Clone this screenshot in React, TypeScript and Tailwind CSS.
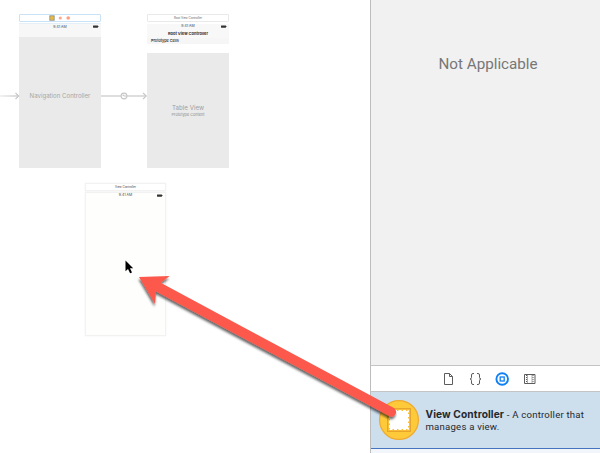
import React from "react";

function Battery({ className = "" }: { className?: string }) {
  return (
    <svg className={className} width="6" height="3" viewBox="0 0 6 3">
      <rect x="0" y="0.4" width="5" height="2.3" rx="0.4" fill="#333" />
      <rect x="5" y="1" width="0.7" height="1" fill="#777" />
    </svg>
  );
}

function StatusBar() {
  return (
    <div className="relative flex h-[4px] items-center justify-center text-[3.5px] leading-[4px] text-[#444]">
      <span>9:41 AM</span>
      <Battery className="absolute top-[0.5px] right-[2px]" />
    </div>
  );
}

function NavigationScene() {
  return (
    <div className="absolute top-[14px] left-[19px] w-[82px]">
      <div className="flex h-[8px] items-center justify-center rounded-[1px] border border-[#c9e2f5] bg-white">
        <svg width="22" height="6" viewBox="0 0 22 6">
          <rect x="0.3" y="0.3" width="5.4" height="5.4" rx="0.5" fill="#a09a88" />
          <circle cx="3" cy="3" r="1.9" fill="#e9b93c" />
          <circle cx="11.3" cy="3" r="1.6" fill="#ffa78c" />
          <circle cx="19.2" cy="3" r="1.8" fill="#ff9f80" />
        </svg>
      </div>
      <div className="mt-[1px] flex h-[145px] flex-col border-t border-[#e4eff7] bg-[#eaeaea]">
        <div className="h-[13px] shrink-0 bg-[#f7f7f7] pt-[0.5px]">
          <StatusBar />
        </div>
        <div className="mt-[54px] text-center text-[6.1px] leading-[10px] text-[#a6a6a6]">Navigation Controller</div>
      </div>
    </div>
  );
}

function TableScene() {
  return (
    <div className="absolute top-[14px] left-[147px] w-[82px]">
      <div className="h-[8px] rounded-[1px] border border-[#e9e9e9] bg-white text-center text-[2.9px] leading-[6px] text-[#666]">
        Root View Controller
      </div>
      <div className="mt-[2px] h-[144px] bg-[#eaeaea]">
        <div className="h-[14px] bg-[#f8f8f8]">
          <StatusBar />
          <div className="pt-[2.5px] text-center text-[4px] leading-[6px] font-bold text-[#333]">Root View Controller</div>
        </div>
        <div className="h-[6px] bg-[#f6f6f6] pl-[4px] text-[3.8px] leading-[6px] font-medium text-[#111]">
          Prototype Cells
        </div>
        <div className="h-[9px] bg-white" />
        <div className="pt-[50px] text-center text-[6.2px] leading-[9px] text-[#a0a0a0]">Table View</div>
        <div className="text-center text-[3.8px] leading-[6px] text-[#8c8c8c]">Prototype Content</div>
      </div>
    </div>
  );
}

function DroppedScene() {
  return (
    <div className="absolute top-[183px] left-[85px] w-[81px]">
      <div className="h-[8px] border border-[#f2f2f2] bg-white text-center text-[2.9px] leading-[7px] text-[#444] shadow-[0_0_1px_#e8e8e8]">
        View Controller
      </div>
      <div className="mt-[1px] h-[144px] border border-[#f2f2f2] bg-[#fefefd] shadow-[0_0_1px_#e8e8e8]">
        <StatusBar />
      </div>
    </div>
  );
}

function Segues() {
  return (
    <svg className="absolute top-[88px] left-0" width="148" height="16" fill="none" stroke="#c6c6c6">
      <defs>
        <linearGradient id="fade" gradientUnits="userSpaceOnUse" x1="0" x2="18" y1="0" y2="0">
          <stop stopColor="#eee" />
          <stop offset="1" stopColor="#ccc" />
        </linearGradient>
      </defs>
      <path d="M0 8H18" stroke="url(#fade)" strokeWidth="1.5" />
      <path d="M15.5 4.8 18.7 8l-3.2 3.2" strokeWidth="1.2" />
      <path d="M101 8h20m6 0h19" stroke="#dedede" strokeWidth="2" />
      <circle cx="124" cy="8" r="2.9" fill="#fff" strokeWidth="1.1" />
      <path d="M122.7 6.7 124.2 8h1.8M143 4.8l3.2 3.2-3.2 3.2" strokeWidth="1.2" />
    </svg>
  );
}

function LibraryTabs() {
  return (
    <div className="flex h-[27px] shrink-0 items-center border-y border-[#c4c4c4] bg-white pl-[70px]">
      <svg width="100" height="16" viewBox="0 0 100 16" fill="none" stroke="#5c5c5c" strokeWidth="1">
        <path d="M3.5 2.5h5l3 3v8h-8zM8.5 2.5v3h3" />
        <path d="M33 2.5h-1q-1.500 0-1.500 1.500v2.300q0 1.700-1.500 1.700 1.500 0 1.500 1.700V12q0 1.500 1.500 1.500h1M36 2.500h1q1.500 0 1.500 1.500v2.300q0 1.700 1.500 1.700-1.500 0-1.500 1.700V12q0 1.500-1.500 1.500h-1" />
        <circle cx="61.2" cy="8" r="5.8" stroke="#0f80f4" strokeWidth="1.9" />
        <rect x="59.2" y="6" width="4" height="4" stroke="#0f80f4" strokeWidth="1.3" />
        <path d="M83.5 3.5h10.500v9h-10.500z" />
        <path d="M85.500 4v8M92 4v8" strokeDasharray="1 1" />
        <path d="M86.500 3.500v9M91 3.500v9" strokeWidth=".5" />
      </svg>
    </div>
  );
}

function LibraryItem() {
  return (
    <div className="flex h-[57px] shrink-0 border-b border-[#4474bd] bg-[#cddeed] pt-[7px] pl-[7px]">
      <svg className="shrink-0" width="42" height="42" viewBox="0 0 42 42">
        <circle cx="21" cy="21" r="19.4" fill="#ffca3a" stroke="#efaa30" strokeWidth="1.2" />
        <rect x="9.5" y="9.5" width="23" height="23" fill="#f9be36" stroke="#e8a52e" />
        <rect x="12" y="12" width="18" height="18" fill="#fff" />
        <rect x="11.5" y="11.5" width="19" height="19" fill="none" stroke="#fff" strokeDasharray="3 1.5" />
      </svg>
      <p className="mt-[8.5px] ml-[5.5px] font-['Roboto','Liberation_Sans',sans-serif] text-[9.6px] leading-[12px] tracking-[0.21px] whitespace-nowrap text-[#25292d]">
        <b className="font-['Inter','Liberation_Sans',sans-serif] text-[10.2px] font-bold tracking-[0.1px]">View Controller</b> - A controller that
        <br />
        manages a view.
      </p>
    </div>
  );
}

function DragArrow() {
  return (
    <svg className="pointer-events-none absolute top-0 left-0" width="600" height="453">
      <defs>
        <filter id="arrowShadow" x="-10%" y="-10%" width="120%" height="120%">
          <feDropShadow dx="-0.5" dy="2.5" stdDeviation="1.2" floodColor="#000" floodOpacity="0.6" />
        </filter>
      </defs>
      <path
        d="M139 277 169.7 276 160.7 282.8 393.5 407.7A4.7 4.7 0 0 1 389.2 416.1L156 291.5 155 304Z"
        fill="#fc584b"
        filter="url(#arrowShadow)"
      />
      <path d="M125.5 260.5v10.8l2.5-2.2 2.1 4.2 1.9-.9-2-4.1h3.2z" fill="#000" stroke="#fff" strokeWidth=".7" paintOrder="stroke" />
    </svg>
  );
}

export default function App() {
  return (
    <div className="relative flex h-[453px] w-[600px] overflow-hidden bg-white font-['Inter','Liberation_Sans',sans-serif]">
      <main className="relative w-[370px] shrink-0">
        <NavigationScene />
        <TableScene />
        <Segues />
        <DroppedScene />
      </main>
      <aside className="flex w-[230px] flex-col border-l border-[#bdbdbd] bg-[#f1f1f1]">
        <div className="h-[365px] shrink-0 pt-[54px] pl-[67.5px] font-['Roboto','Liberation_Sans',sans-serif] text-[15.2px] leading-[20px] whitespace-nowrap text-[#777]">
          Not Applicable
        </div>
        <LibraryTabs />
        <LibraryItem />
        <div className="grow bg-[#f2f6fb]" />
      </aside>
      <DragArrow />
    </div>
  );
}
